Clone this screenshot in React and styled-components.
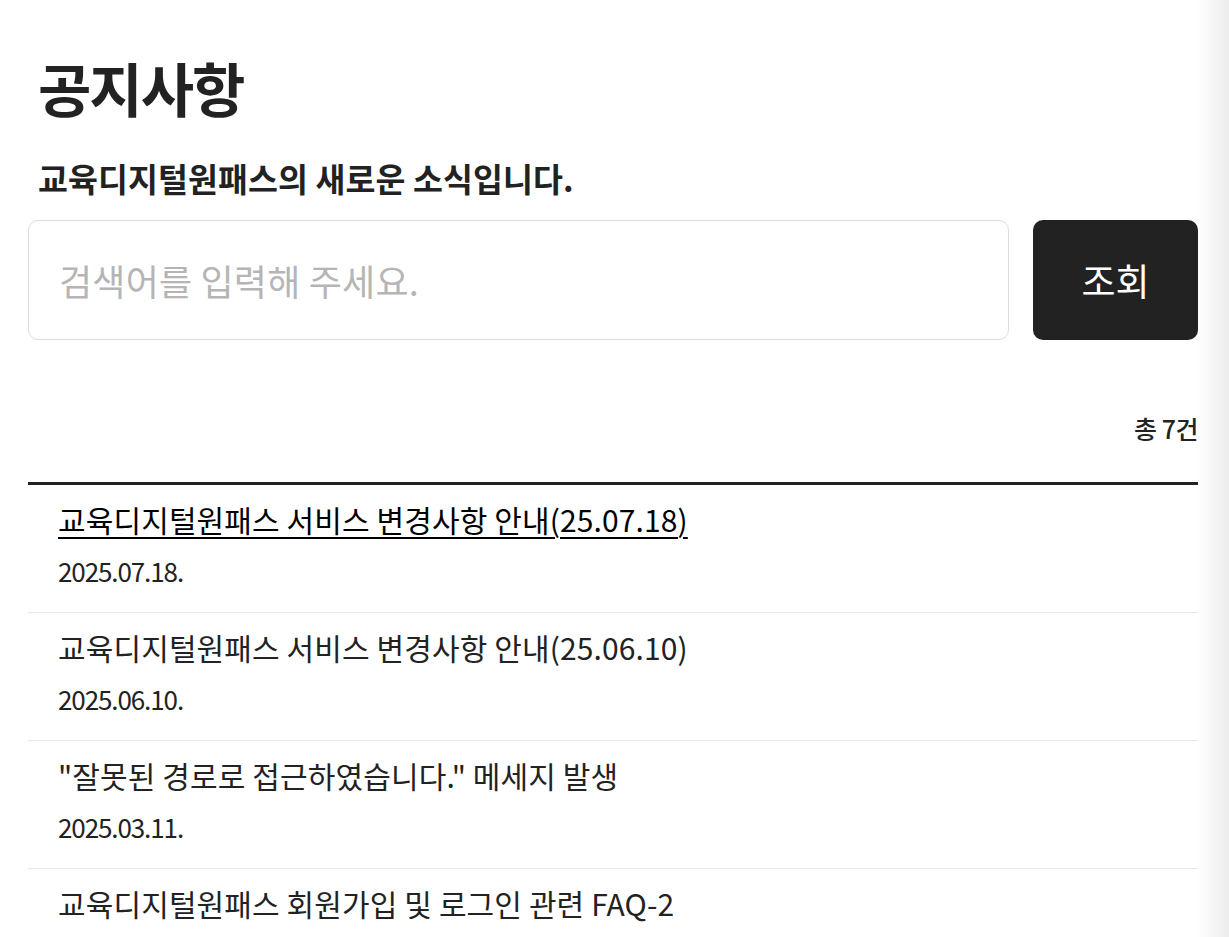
import React from "react";
import styled, { createGlobalStyle } from "styled-components";

const GlobalStyle = createGlobalStyle`
  html, body {
    margin: 0;
    padding: 0;
  }
  body {
    background: linear-gradient(to right, #fff calc(100% - 32px), #ececec);
    font-family: "Noto Sans CJK KR", "Noto Sans", sans-serif;
    color: #222;
  }
`;

const Page = styled.main`
  width: 1170px;
  padding: 47px 0 0 28px;
`;

const Title = styled.h1`
  margin: 0 0 0 10px;
  font-size: 58px;
  line-height: 80px;
  font-weight: 700;
  letter-spacing: -2px;
`;

const Subtitle = styled.p`
  margin: 31px 0 0 10px;
  font-size: 32.5px;
  line-height: 40px;
  font-weight: 700;
  letter-spacing: 0.1px;
`;

const SearchRow = styled.form`
  display: flex;
  gap: 24px;
  margin-top: 22px;
`;

const SearchInput = styled.input`
  flex: 1;
  height: 120px;
  box-sizing: border-box;
  border: 1px solid #dcdcdc;
  border-radius: 10px;
  padding: 0 30px;
  font-family: inherit;
  font-size: 36px;
  letter-spacing: 0.2px;
  color: #222;
  outline: none;

  &::placeholder {
    color: #b5b5b5;
  }
`;

const SearchButton = styled.button`
  width: 165px;
  height: 120px;
  border: 0;
  border-radius: 10px;
  background: #222;
  color: #fff;
  font-family: inherit;
  font-size: 37px;
  cursor: pointer;
`;

const Count = styled.div`
  margin-top: 68px;
  text-align: right;
  font-size: 25px;
  line-height: 40px;
  font-weight: 500;
  letter-spacing: -0.5px;
`;

const List = styled.ul`
  list-style: none;
  margin: 34px 0 0;
  padding: 0;
  border-top: 3px solid #222;
`;

const Item = styled.li`
  padding: 14px 30px 23px;
  border-bottom: 1px solid #e8e8e8;
`;

const ItemTitle = styled.a`
  display: inline-block;
  font-size: 30px;
  line-height: 40px;
  letter-spacing: 0.12px;
  color: ${(p) => (p.$active ? "#000" : "#222")};
  text-decoration: ${(p) => (p.$active ? "underline" : "none")};
  text-underline-offset: 5px;
  text-decoration-thickness: 2px;
  cursor: pointer;
`;

const ItemDate = styled.div`
  margin-top: 14px;
  font-size: 26px;
  line-height: 36px;
  letter-spacing: -1.1px;
  color: #222;
`;

const notices = [
  { title: "교육디지털원패스 서비스 변경사항 안내(25.07.18)", date: "2025.07.18." },
  { title: "교육디지털원패스 서비스 변경사항 안내(25.06.10)", date: "2025.06.10." },
  { title: "\"잘못된 경로로 접근하였습니다.\" 메세지 발생", date: "2025.03.11." },
  { title: "교육디지털원패스 회원가입 및 로그인 관련 FAQ-2", date: "2025.02.20." },
];

const App = () => (
  <>
    <GlobalStyle />
    <Page>
      <Title>공지사항</Title>
      <Subtitle>교육디지털원패스의 새로운 소식입니다.</Subtitle>
      <SearchRow onSubmit={(e) => e.preventDefault()}>
        <SearchInput placeholder="검색어를 입력해 주세요." />
        <SearchButton type="submit">조회</SearchButton>
      </SearchRow>
      <Count>총 7건</Count>
      <List>
        {notices.map((n, i) => (
          <Item key={n.date}>
            <ItemTitle $active={i === 0}>{n.title}</ItemTitle>
            <ItemDate>{n.date}</ItemDate>
          </Item>
        ))}
      </List>
    </Page>
  </>
);

export default App;
